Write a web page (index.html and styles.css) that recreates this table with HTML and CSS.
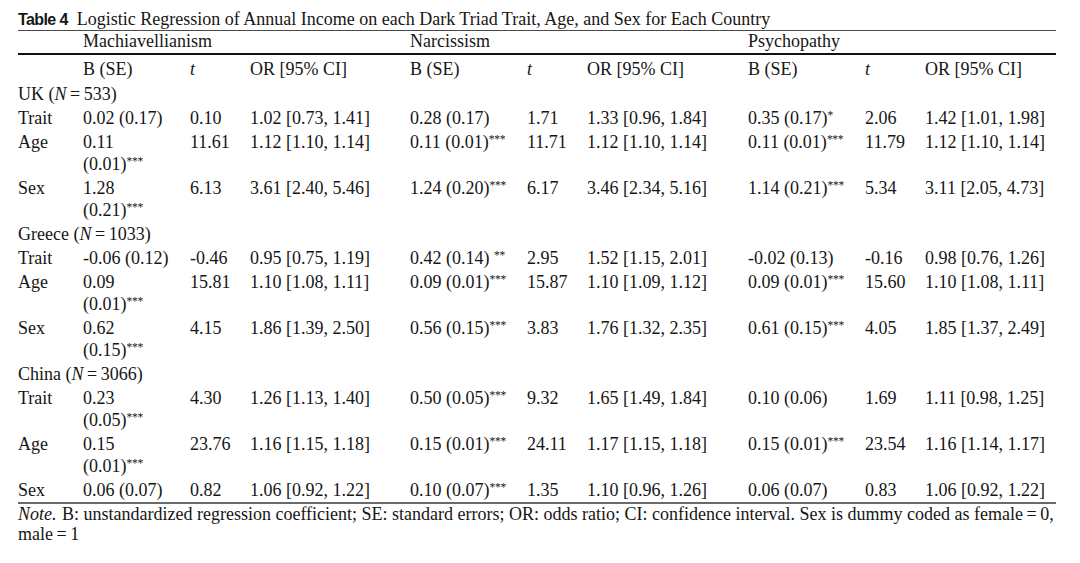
FILE: index.html
```html
<!DOCTYPE html>
<html lang="en">
<head>
<meta charset="utf-8">
<title>Table 4</title>
<link rel="stylesheet" href="styles.css">
</head>
<body>
<div class="page">
  <div class="caption"><span class="label">Table 4</span>Logistic Regression of Annual Income on each Dark Triad Trait, Age, and Sex for Each Country</div>
  <table class="results">
    <colgroup>
      <col class="c-label"><col class="c-b1"><col class="c-t"><col class="c-or1">
      <col class="c-b"><col class="c-t"><col class="c-or2">
      <col class="c-b"><col class="c-t"><col class="c-or3">
    </colgroup>
    <thead>
      <tr class="groups">
        <th></th>
        <th colspan="3">Machiavellianism</th>
        <th colspan="3">Narcissism</th>
        <th colspan="3">Psychopathy</th>
      </tr>
      <tr class="stats">
        <th></th>
        <th>B (SE)</th><th><i>t</i></th><th>OR [95% CI]</th>
        <th>B (SE)</th><th><i>t</i></th><th>OR [95% CI]</th>
        <th>B (SE)</th><th><i>t</i></th><th>OR [95% CI]</th>
      </tr>
    </thead>
    <tbody>
      <tr class="country"><td colspan="10">UK (<i>N</i>&thinsp;=&thinsp;533)</td></tr>
      <tr>
        <td>Trait</td>
        <td>0.02 (0.17)</td><td>0.10</td><td>1.02 [0.73, 1.41]</td>
        <td>0.28 (0.17)</td><td>1.71</td><td>1.33 [0.96, 1.84]</td>
        <td>0.35 (0.17)<sup>*</sup></td><td>2.06</td><td>1.42 [1.01, 1.98]</td>
      </tr>
      <tr>
        <td>Age</td>
        <td>0.11<br>(0.01)<sup>***</sup></td><td>11.61</td><td>1.12 [1.10, 1.14]</td>
        <td>0.11 (0.01)<sup>***</sup></td><td>11.71</td><td>1.12 [1.10, 1.14]</td>
        <td>0.11 (0.01)<sup>***</sup></td><td>11.79</td><td>1.12 [1.10, 1.14]</td>
      </tr>
      <tr>
        <td>Sex</td>
        <td>1.28<br>(0.21)<sup>***</sup></td><td>6.13</td><td>3.61 [2.40, 5.46]</td>
        <td>1.24 (0.20)<sup>***</sup></td><td>6.17</td><td>3.46 [2.34, 5.16]</td>
        <td>1.14 (0.21)<sup>***</sup></td><td>5.34</td><td>3.11 [2.05, 4.73]</td>
      </tr>
      <tr class="country"><td colspan="10">Greece (<i>N</i>&thinsp;=&thinsp;1033)</td></tr>
      <tr>
        <td>Trait</td>
        <td>-0.06 (0.12)</td><td>-0.46</td><td>0.95 [0.75, 1.19]</td>
        <td>0.42 (0.14) <sup>**</sup></td><td>2.95</td><td>1.52 [1.15, 2.01]</td>
        <td>-0.02 (0.13)</td><td>-0.16</td><td>0.98 [0.76, 1.26]</td>
      </tr>
      <tr>
        <td>Age</td>
        <td>0.09<br>(0.01)<sup>***</sup></td><td>15.81</td><td>1.10 [1.08, 1.11]</td>
        <td>0.09 (0.01)<sup>***</sup></td><td>15.87</td><td>1.10 [1.09, 1.12]</td>
        <td>0.09 (0.01)<sup>***</sup></td><td>15.60</td><td>1.10 [1.08, 1.11]</td>
      </tr>
      <tr>
        <td>Sex</td>
        <td>0.62<br>(0.15)<sup>***</sup></td><td>4.15</td><td>1.86 [1.39, 2.50]</td>
        <td>0.56 (0.15)<sup>***</sup></td><td>3.83</td><td>1.76 [1.32, 2.35]</td>
        <td>0.61 (0.15)<sup>***</sup></td><td>4.05</td><td>1.85 [1.37, 2.49]</td>
      </tr>
      <tr class="country"><td colspan="10">China (<i>N</i>&thinsp;=&thinsp;3066)</td></tr>
      <tr>
        <td>Trait</td>
        <td>0.23<br>(0.05)<sup>***</sup></td><td>4.30</td><td>1.26 [1.13, 1.40]</td>
        <td>0.50 (0.05)<sup>***</sup></td><td>9.32</td><td>1.65 [1.49, 1.84]</td>
        <td>0.10 (0.06)</td><td>1.69</td><td>1.11 [0.98, 1.25]</td>
      </tr>
      <tr>
        <td>Age</td>
        <td>0.15<br>(0.01)<sup>***</sup></td><td>23.76</td><td>1.16 [1.15, 1.18]</td>
        <td>0.15 (0.01)<sup>***</sup></td><td>24.11</td><td>1.17 [1.15, 1.18]</td>
        <td>0.15 (0.01)<sup>***</sup></td><td>23.54</td><td>1.16 [1.14, 1.17]</td>
      </tr>
      <tr class="last">
        <td>Sex</td>
        <td>0.06 (0.07)</td><td>0.82</td><td>1.06 [0.92, 1.22]</td>
        <td>0.10 (0.07)<sup>***</sup></td><td>1.35</td><td>1.10 [0.96, 1.26]</td>
        <td>0.06 (0.07)</td><td>0.83</td><td>1.06 [0.92, 1.22]</td>
      </tr>
    </tbody>
  </table>
  <p class="note"><i class="note-lead">Note.</i> B: unstandardized regression coefficient; SE: standard errors; OR: odds ratio; CI: confidence interval. Sex is dummy coded as female&thinsp;=&thinsp;0, male&thinsp;=&thinsp;1</p>
</div>
</body>
</html>
```
FILE: styles.css
```css
html, body {
  margin: 0;
  padding: 0;
  background: #ffffff;
}

body {
  color: #161616;
  font-family: "Liberation Serif", "Times New Roman", serif;
  font-size: 18px;
}

.page {
  width: 1038px;
  padding: 9px 0 0 18px;
}

.caption {
  line-height: 21px;
  white-space: nowrap;
  border-bottom: 1px solid #4a4a4a;
}

.caption .label {
  font-family: "Liberation Sans", Arial, sans-serif;
  font-weight: 700;
  font-size: 16px;
  letter-spacing: -0.6px;
  margin-right: 9px;
  line-height: 1;
}

.results {
  width: 1038px;
  table-layout: fixed;
  border-collapse: separate;
  border-spacing: 0;
}

.c-label { width: 65px; }
.c-b1 { width: 107px; }
.c-t { width: 60px; }
.c-or1 { width: 160px; }
.c-b { width: 117px; }
.c-or2 { width: 161px; }
.c-or3 { width: 131px; }

.results th,
.results td {
  padding: 1px 0 1px;
  text-align: left;
  vertical-align: top;
  font-weight: normal;
  line-height: 22px;
  white-space: nowrap;
}

.results .groups th {
  padding: 0 0 1px;
  line-height: 21px;
  border-bottom: 2px solid #111111;
}

.results .stats th {
  padding: 3px 0 2px;
}

.results .last td {
  border-bottom: 2px solid #6a6a6a;
}

.results sup {
  font-size: 11.5px;
  line-height: 0;
  vertical-align: 5px;
  letter-spacing: -0.3px;
}

.note {
  margin: 0;
  line-height: 20px;
}

.note-lead {
  padding-right: 1px;
}
```
